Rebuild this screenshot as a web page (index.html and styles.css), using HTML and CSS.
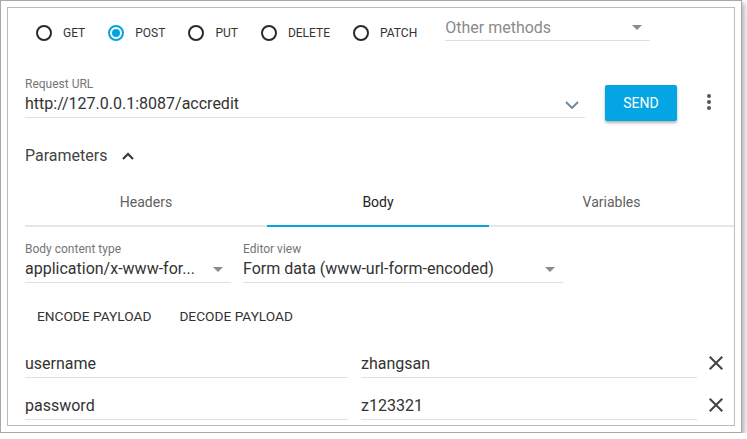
FILE: index.html
```html
<!DOCTYPE html>
<html>
<head>
<meta charset="utf-8">
<link rel="stylesheet" href="styles.css">
</head>
<body>
<div class="frame">
  <div class="panel">
    <div class="methods">
      <label class="radio"><span class="circle"></span><span class="rlabel">GET</span></label>
      <label class="radio"><span class="circle checked"></span><span class="rlabel">POST</span></label>
      <label class="radio"><span class="circle"></span><span class="rlabel">PUT</span></label>
      <label class="radio"><span class="circle"></span><span class="rlabel">DELETE</span></label>
      <label class="radio"><span class="circle"></span><span class="rlabel">PATCH</span></label>
      <div class="select other">
        <span class="placeholder">Other methods</span>
        <span class="tri"></span>
      </div>
    </div>

    <div class="url-row">
      <div class="field url-field">
        <div class="flabel">Request URL</div>
        <div class="fvalue">
          <span>http://127.0.0.1:8087/accredit</span>
          <svg class="chev" width="14" height="8" viewBox="0 0 14 8"><path d="M1 1 L7 7 L13 1" fill="none" stroke="#6b8593" stroke-width="1.8"/></svg>
        </div>
      </div>
      <button class="send">SEND</button>
      <div class="kebab"><i></i><i></i><i></i></div>
    </div>

    <div class="params">
      <span>Parameters</span>
      <svg width="12" height="8" viewBox="0 0 12 8"><path d="M1 7 L6 2 L11 7" fill="none" stroke="#333" stroke-width="2"/></svg>
    </div>

    <div class="tabs">
      <div class="tab">Headers</div>
      <div class="tab active">Body</div>
      <div class="tab">Variables</div>
    </div>

    <div class="body-fields">
      <div class="field ctype">
        <div class="flabel">Body content type</div>
        <div class="fvalue"><span>application/x-www-for...</span><span class="tri"></span></div>
      </div>
      <div class="field eview">
        <div class="flabel">Editor view</div>
        <div class="fvalue"><span>Form data (www-url-form-encoded)</span><span class="tri"></span></div>
      </div>
    </div>

    <div class="payload">
      <button class="flat">ENCODE PAYLOAD</button>
      <button class="flat">DECODE PAYLOAD</button>
    </div>

    <div class="kv">
      <div class="input key">username</div>
      <div class="input val">zhangsan</div>
      <svg class="close" width="24" height="24" viewBox="0 0 24 24"><path d="M19 6.41L17.59 5 12 10.59 6.41 5 5 6.41 10.59 12 5 17.59 6.41 19 12 13.41 17.59 19 19 17.59 13.41 12z" fill="#444"/></svg>
    </div>
    <div class="kv kv2">
      <div class="input key">password</div>
      <div class="input val">z123321</div>
      <svg class="close" width="24" height="24" viewBox="0 0 24 24"><path d="M19 6.41L17.59 5 12 10.59 6.41 5 5 6.41 10.59 12 5 17.59 6.41 19 12 13.41 17.59 19 19 17.59 13.41 12z" fill="#444"/></svg>
    </div>
  </div>
</div>
</body>
</html>
```

FILE: styles.css
```css
* { box-sizing: border-box; }
html, body { margin: 0; padding: 0; background: #fff; }
body {
  font-family: Roboto, "Liberation Sans", sans-serif;
  color: #333;
}
.frame {
  width: 742px;
  height: 433px;
  border: 1px solid #a8a8a8;
  padding: 6px;
  box-shadow: 3px 3px 5px rgba(0,0,0,0.28);
  background: #fff;
}
.panel {
  width: 728px;
  height: 419px;
  border: 1px solid #bdbdbd;
  padding-left: 17px;
  overflow: hidden;
}
.methods {
  height: 50px;
  display: flex;
  align-items: center;
  padding-left: 11px;
}
.radio {
  display: flex;
  align-items: center;
  margin-right: 23px;
  font-size: 12px;
  color: #333;
}
.circle {
  width: 16px;
  height: 16px;
  border: 2px solid #2a2a2a;
  border-radius: 50%;
  margin-right: 11px;
  position: relative;
}
.circle.checked { border-color: #03a4e0; }
.circle.checked::after {
  content: "";
  position: absolute;
  left: 2px; top: 2px;
  width: 8px; height: 8px;
  border-radius: 50%;
  background: #03a4e0;
}
.select.other {
  align-self: flex-start;
  margin-top: 4px;
  margin-left: 5px;
  width: 205px;
  height: 29px;
  border-bottom: 1px solid #e0e0e0;
  display: flex;
  justify-content: space-between;
  align-items: center;
  padding-top: 2px;
  padding-right: 8px;
}
.placeholder { font-size: 16px; color: #8a8a8a; }
.tri {
  width: 0; height: 0;
  border-left: 5px solid transparent;
  border-right: 5px solid transparent;
  border-top: 5px solid #8a8a8a;
}
.url-row {
  margin-top: 19px;
  display: flex;
  align-items: flex-start;
}
.field { border-bottom: 1px solid #e0e0e0; }
.flabel { font-size: 12px; line-height: 14px; color: #757575; }
.fvalue {
  font-size: 16px;
  line-height: 20px;
  color: #333;
  display: flex;
  justify-content: space-between;
  align-items: center;
}
.url-field { width: 560px; }
.url-field .fvalue { margin-top: 3px; padding-bottom: 3px; padding-right: 6px; }
.chev { margin-top: 2px; }
.send {
  margin-left: 20px;
  margin-top: 8px;
  width: 72px;
  height: 36px;
  border: none;
  border-radius: 2px;
  background: #03a6e2;
  color: #fff;
  font-family: Roboto, "Liberation Sans", sans-serif;
  font-size: 14px;
  box-shadow: 0 2px 3px rgba(0,0,0,0.3);
  padding: 0;
}
.kebab {
  margin-left: 30px;
  margin-top: 17px;
  display: flex;
  flex-direction: column;
  gap: 2px;
}
.kebab i {
  display: block;
  width: 4px; height: 4px;
  border-radius: 50%;
  background: #555;
}
.params {
  margin-top: 25px;
  height: 20px;
  display: flex;
  align-items: center;
  font-size: 16px;
  line-height: 20px;
  color: #444;
}
.params svg { margin-left: 15px; margin-top: -1px; }
.tabs {
  margin-top: 13px;
  display: grid;
  grid-template-columns: 242px 222px 1fr;
  border-bottom: 2px solid #e6e6e6;
}
.tab {
  height: 48px;
  line-height: 46px;
  margin-bottom: -2px;
  border-bottom: 2px solid transparent;
  text-align: center;
  font-size: 14px;
  color: #5f5f5f;
}
.tab.active { color: #222; border-bottom-color: #03a4e0; }
.body-fields {
  margin-top: 15px;
  display: flex;
  gap: 12px;
}
.body-fields .fvalue { margin-top: 3px; padding-bottom: 3px; padding-right: 8px; }
.ctype { width: 206px; }
.eview { width: 320px; }
.payload {
  margin-top: 15px;
  height: 36px;
  display: flex;
  gap: 4px;
  padding-left: 0;
}
.flat {
  background: none;
  border: none;
  height: 36px;
  padding: 0 12px;
  font-family: Roboto, "Liberation Sans", sans-serif;
  font-size: 13.7px;
  color: #333;
}
.kv {
  margin-top: 20px;
  display: flex;
  align-items: center;
}
.kv2 { margin-top: 18px; }
.input {
  font-size: 16px;
  line-height: 20px;
  padding-bottom: 3px;
  border-bottom: 1px solid #e0e0e0;
  color: #333;
}
.key { width: 323px; }
.val { width: 336px; margin-left: 13px; }
.close { margin-left: 7px; margin-top: -6px; }
```
